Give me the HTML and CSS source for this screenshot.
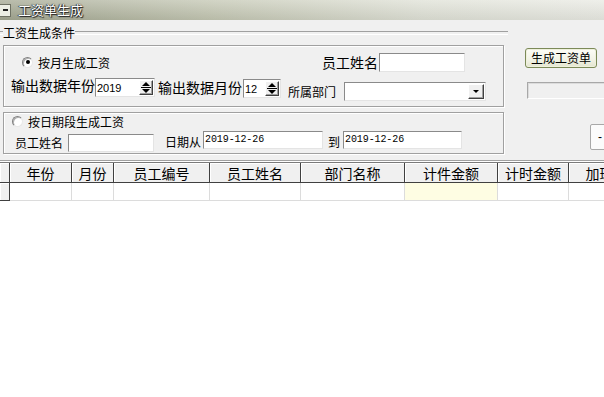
FILE: index.html
```html
<!DOCTYPE html>
<html>
<head>
<meta charset="utf-8">
<link rel="stylesheet" href="styles.css">
</head>
<body>
<div class="titlebar">
  <span class="sysbtn"><i></i></span>
  <span class="title">工资单生成</span>
</div>
<div class="top">
  <div class="cond">
    <div class="cond-title"><span>工资生成条件</span></div>
    <div class="box box1">
      <div class="row r1">
        <span class="radio checked"></span>
        <span class="lbl12 radio-lbl">按月生成工资</span>
        <span class="lbl14 name-lbl">员工姓名</span>
        <span class="input name-in"></span>
      </div>
      <div class="row r2">
        <span class="lbl14 year-lbl">输出数据年份</span>
        <span class="input spin year-in"><span class="val">2019</span><span class="spinbtn"><i class="up"></i><b></b><i class="dn"></i></span></span>
        <span class="lbl14 month-lbl">输出数据月份</span>
        <span class="input spin month-in"><span class="val">12</span><span class="spinbtn"><i class="up"></i><b></b><i class="dn"></i></span></span>
        <span class="lbl12 dept-lbl">所属部门</span>
        <span class="input select dept-in"><span class="dropbtn"><i></i></span></span>
      </div>
    </div>
    <div class="box box2">
      <div class="row r3">
        <span class="radio"></span>
        <span class="lbl12 radio2-lbl">按日期段生成工资</span>
      </div>
      <div class="row r4">
        <span class="lbl12 name2-lbl">员工姓名</span>
        <span class="input name2-in"></span>
        <span class="lbl12 from-lbl">日期从</span>
        <span class="input date-in from-in">2019-12-26</span>
        <span class="lbl12 to-lbl">到</span>
        <span class="input date-in to-in">2019-12-26</span>
      </div>
    </div>
  </div>
  <div class="side">
    <button class="gen-btn">生成工资单</button>
    <div class="progress"></div>
    <button class="btn2">-</button>
  </div>
</div>
<div class="grid">
  <table>
    <thead>
      <tr>
        <th class="rh c0"></th>
        <th class="c1">年份</th>
        <th class="c2">月份</th>
        <th class="c3">员工编号</th>
        <th class="c4">员工姓名</th>
        <th class="c5">部门名称</th>
        <th class="c6">计件金额</th>
        <th class="c7">计时金额</th>
        <th class="c8">加班金额</th>
      </tr>
    </thead>
    <tbody>
      <tr>
        <td class="rh"></td>
        <td></td>
        <td></td>
        <td></td>
        <td></td>
        <td></td>
        <td class="hl"></td>
        <td></td>
        <td></td>
      </tr>
    </tbody>
  </table>
</div>
</body>
</html>
```

FILE: styles.css
```css
* { box-sizing: border-box; }
html, body { margin: 0; padding: 0; }
body {
  width: 604px;
  height: 397px;
  overflow: hidden;
  background: #ffffff;
  font-family: "Noto Sans CJK SC", "Noto Sans", sans-serif;
  font-size: 12px;
  color: #000;
}

/* title bar */
.titlebar {
  height: 20px;
  display: flex;
  align-items: center;
  background: linear-gradient(to bottom, rgba(255,255,255,0.25), rgba(0,0,0,0.06)),
              linear-gradient(to right, #a2a690 0%, #c3c6b2 35%, #dfe1d6 70%, #e9eae3 100%);
}
.sysbtn {
  width: 11px;
  height: 13px;
  background: #eceee4;
  border: 1px solid #6f7264;
  border-left: none;
  display: flex;
  align-items: center;
  justify-content: center;
}
.sysbtn i {
  display: block;
  width: 5px;
  height: 2px;
  background: #222;
}
.title {
  margin-left: 7px;
  font-size: 13px;
  line-height: 18px;
  color: #fff;
  text-shadow: 0 0 1px #000, 1px 1px 1px #222, -1px 0 1px #444;
}

/* top area */
.top {
  display: flex;
  height: 140px;
  background: #f0f0f0;
}
.cond {
  width: 508px;
  flex: none;
}
.cond-title {
  margin-top: 4px;
  height: 17px;
  display: flex;
  align-items: center;
}
.cond-title::before,
.cond-title::after {
  content: "";
  height: 2px;
  border-top: 1px solid #a0a0a0;
  border-bottom: 1px solid #ffffff;
  margin-top: 1px;
}
.cond-title::before { width: 3px; }
.cond-title::after { flex: 1; }
.cond-title span {
  font-size: 12px;
  line-height: 17px;
}

.box {
  margin-left: 3px;
  width: 501px;
  border: 1px solid #a0a0a0;
  box-shadow: inset 1px 1px 0 #ffffff, 1px 1px 0 #ffffff;
}
.box1 {
  margin-top: 4px;
  height: 62px;
  padding-top: 6px;
}
.box2 {
  margin-top: 5px;
  height: 42px;
}
.row {
  display: flex;
  align-items: flex-start;
}

.lbl12 { font-size: 12px; line-height: 17px; white-space: nowrap; }
.lbl14 { font-size: 14px; line-height: 18px; white-space: nowrap; }

.radio {
  width: 11px;
  height: 11px;
  border-radius: 50%;
  border: 1px solid;
  border-color: #808080 #e8e8e8 #e8e8e8 #808080;
  background: #fff;
  box-shadow: inset 1px 1px 0 #b0b0b0;
  display: flex;
  align-items: center;
  justify-content: center;
  flex: none;
}
.radio.checked::after {
  content: "";
  width: 4px;
  height: 4px;
  border-radius: 50%;
  background: #000;
}

/* row 1 */
.r1 { height: 20px; align-items: center; }
.r1 .radio { margin-left: 18px; }
.radio-lbl { margin-left: 5px; }
.name-lbl { margin-left: 212px; }
.name-in { width: 86px; height: 19px; margin-left: 1px; }

/* inputs */
.input {
  display: flex;
  align-items: center;
  background: #fff;
  border: 1px solid;
  border-color: #8a8a8a #e4e4e4 #e4e4e4 #8a8a8a;
  flex: none;
}
.spin .val {
  font-family: "Liberation Sans", Arial, sans-serif;
  font-size: 11px;
  line-height: 14px;
  padding-left: 1px;
  flex: 1;
}
.spinbtn {
  width: 14px;
  height: 15px;
  margin-right: 1px;
  display: flex;
  flex-direction: column;
  justify-content: center;
  align-items: center;
  gap: 1px;
  background: #f0f0f0;
  border: 1px solid;
  border-color: #ffffff #404040 #404040 #ffffff;
  box-shadow: inset -1px -1px 0 #a0a0a0;
}
.spinbtn i {
  display: block;
  width: 0;
  height: 0;
  border-left: 4px solid transparent;
  border-right: 4px solid transparent;
}
.spinbtn .up { border-bottom: 4px solid #000; }
.spinbtn .dn { border-top: 4px solid #000; }
.spinbtn b {
  display: block;
  width: 10px;
  height: 1px;
  background: #000;
}

/* row 2 */
.r2 { margin-top: 4px; height: 24px; }
.year-lbl { margin-left: 7px; }
.year-in { width: 60px; height: 19px; margin-top: 2px; }
.month-lbl { margin-left: 3px; margin-top: 2px; }
.month-in { width: 38px; height: 19px; margin-left: 1px; margin-top: 3px; }
.dept-lbl { margin-left: 7px; margin-top: 7px; }
.dept-in { width: 142px; height: 19px; margin-left: 8px; margin-top: 6px; justify-content: flex-end; }
.dropbtn {
  width: 16px;
  height: 15px;
  margin-right: 1px;
  background: #f0f0f0;
  border: 1px solid;
  border-color: #ffffff #404040 #404040 #ffffff;
  box-shadow: inset -1px -1px 0 #a0a0a0;
  display: flex;
  align-items: center;
  justify-content: center;
}
.dropbtn i {
  display: block;
  width: 0;
  height: 0;
  border-left: 3px solid transparent;
  border-right: 3px solid transparent;
  border-top: 3px solid #000;
}

/* box 2 */
.r3 { height: 17px; align-items: center; }
.r3 .radio { margin-left: 8px; }
.radio2-lbl { margin-left: 5px; }
.r4 { margin-top: 1px; height: 21px; }
.name2-lbl { margin-left: 11px; margin-top: 3px; }
.name2-in { width: 86px; height: 18px; margin-left: 5px; margin-top: 3px; }
.from-lbl { margin-left: 11px; margin-top: 2px; }
.date-in {
  height: 18px;
  font-family: "Liberation Mono", "DejaVu Sans Mono", monospace;
  font-size: 10px;
  line-height: 14px;
  padding-left: 1px;
  letter-spacing: -0.1px;
}
.from-in { width: 120px; margin-left: 2px; }
.to-lbl { margin-left: 5px; margin-top: 2px; }
.to-in { width: 119px; margin-left: 3px; }

/* side */
.side {
  flex: 1;
  display: flex;
  flex-direction: column;
  align-items: flex-start;
  overflow: hidden;
}
.gen-btn {
  margin-top: 28px;
  margin-left: 17px;
  width: 72px;
  height: 20px;
  padding: 0;
  font-family: "Noto Sans CJK SC", sans-serif;
  font-size: 12px;
  line-height: 16px;
  color: #000;
  border: 1px solid #7c8a58;
  border-radius: 3px;
  background: linear-gradient(to bottom, #fdfdf7 0%, #f2f3e6 60%, #e3e5cf 100%);
  box-shadow: inset 0 0 0 1px #eef0dc;
}
.progress {
  margin-top: 14px;
  margin-left: 19px;
  width: 90px;
  flex: none;
  height: 17px;
  border: 1px solid;
  border-color: #a8a8a8 #ffffff #ffffff #a8a8a8;
  background: #f0f0f0;
  box-shadow: inset 1px 1px 0 #dcdcdc;
}
.btn2 {
  margin-top: 25px;
  margin-left: 82px;
  width: 30px;
  height: 26px;
  flex: none;
  padding: 0 0 0 7px;
  text-align: left;
  font-family: "Liberation Sans", sans-serif;
  font-size: 12px;
  background: #fbfbfb;
  border: 1px solid #a8a8a8;
  border-radius: 2px;
  color: #000;
}

/* grid */
.grid {
  background: #ffffff;
  border-top: 1px solid #a0a0a0;
  box-shadow: inset 0 1px 0 #ffffff;
  padding-top: 1px;
  overflow: hidden;
  height: 237px;
}
table {
  border-collapse: separate;
  border-spacing: 0;
  table-layout: fixed;
  width: 659px;
  border-top: 1px solid #7a7a7a;
}
th, td { padding: 0; }
th {
  height: 20px;
  font-weight: normal;
  font-size: 14px;
  line-height: 18px;
  text-align: center;
  background: #f0f0f0;
  border-right: 1px solid #404040;
  border-bottom: 1px solid #404040;
  box-shadow: inset 1px 1px 0 #ffffff;
  white-space: nowrap;
  overflow: hidden;
}
td {
  height: 18px;
  border-right: 1px solid #dcdcdc;
  border-bottom: 1px solid #dcdcdc;
  background: #fff;
}
td.rh {
  background: #f0f0f0;
  border-right: 1px solid #404040;
  border-bottom: 1px solid #404040;
  box-shadow: inset 1px 1px 0 #ffffff;
}
td.hl { background: #fefde3; }
.c0 { width: 10px; }
.c1 { width: 62px; }
.c2 { width: 42px; }
.c3 { width: 96px; }
.c4 { width: 91px; }
.c5 { width: 104px; }
.c6 { width: 93px; }
.c7 { width: 71px; }
.c8 { width: 90px; }
```
